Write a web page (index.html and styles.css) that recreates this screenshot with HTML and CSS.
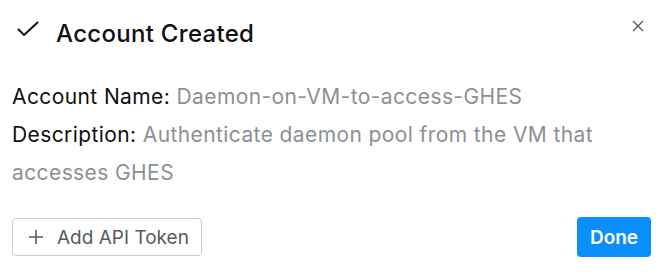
FILE: index.html
```html
<!DOCTYPE html>
<html>
<head>
<meta charset="utf-8">
<link rel="stylesheet" href="styles.css">
</head>
<body>
<div class="dialog">
  <div class="header">
    <svg class="check" width="22" height="16" viewBox="0 0 22 16"><path d="M1.5 8.5 L7 14 L20.5 1.5" fill="none" stroke="#111" stroke-width="2" stroke-linecap="round" stroke-linejoin="round"/></svg>
    <h1 class="title">Account Created</h1>
    <svg class="close" width="12" height="12" viewBox="0 0 12 12"><path d="M1 1 L11 11 M11 1 L1 11" fill="none" stroke="#555b63" stroke-width="1.4"/></svg>
  </div>
  <div class="body">
    <p class="line"><span class="label">Account Name:</span> <span class="value">Daemon-on-VM-to-access-GHES</span></p>
    <p class="line"><span class="label">Description:</span> <span class="value">Authenticate daemon pool from the VM that</span><br><span class="value">accesses GHES</span></p>
  </div>
  <div class="footer">
    <button class="btn btn-secondary"><svg class="plus" width="16" height="16" viewBox="0 0 16 16"><path d="M8 1 V15 M1 8 H15" stroke="#555b63" stroke-width="1.6" fill="none"/></svg>Add API Token</button>
    <button class="btn btn-primary">Done</button>
  </div>
</div>
</body>
</html>
```
FILE: styles.css
```css
html, body {
  margin: 0;
  padding: 0;
  background: #fff;
}
body {
  font-family: Inter, "Noto Sans", sans-serif;
  color: #111;
}
.dialog {
  width: 662px;
  height: 276px;
  box-sizing: border-box;
  padding: 0 11px 0 12px;
  display: flex;
  flex-direction: column;
}
.header {
  display: flex;
  align-items: center;
  height: 66px;
  padding-left: 5px;
}
.check {
  flex: none;
  margin-top: -9px;
}
.title {
  margin: 0 0 0 17px;
  font-size: 24px;
  font-weight: 500;
  letter-spacing: 0.3px;
  flex: 1;
}
.close {
  flex: none;
  margin-right: 7px;
  margin-top: -14px;
}
.body {
  padding-top: 12px;
}
.line {
  margin: 0;
  font-size: 21px;
  line-height: 38px;
  letter-spacing: 0.4px;
  white-space: nowrap;
}
.label {
  color: #111;
}
.value {
  color: #8e8f93;
}
.footer {
  display: flex;
  justify-content: space-between;
  align-items: center;
  margin-top: 25px;
}
.btn {
  font-family: Inter, "Noto Sans", sans-serif;
  font-size: 19px;
  height: 38px;
  border-radius: 4px;
  display: flex;
  align-items: center;
  white-space: nowrap;
  cursor: pointer;
}
.btn-secondary {
  background: #fff;
  border: 1px solid #c9ccd1;
  color: #555b63;
  padding: 0 12px 0 15px;
}
.plus {
  margin-right: 13px;
  flex: none;
}
.btn-primary {
  background: #0a8efc;
  border: none;
  color: #fff;
  font-weight: 600;
  padding: 0;
  height: 40px;
  width: 74px;
  justify-content: center;
}
```
